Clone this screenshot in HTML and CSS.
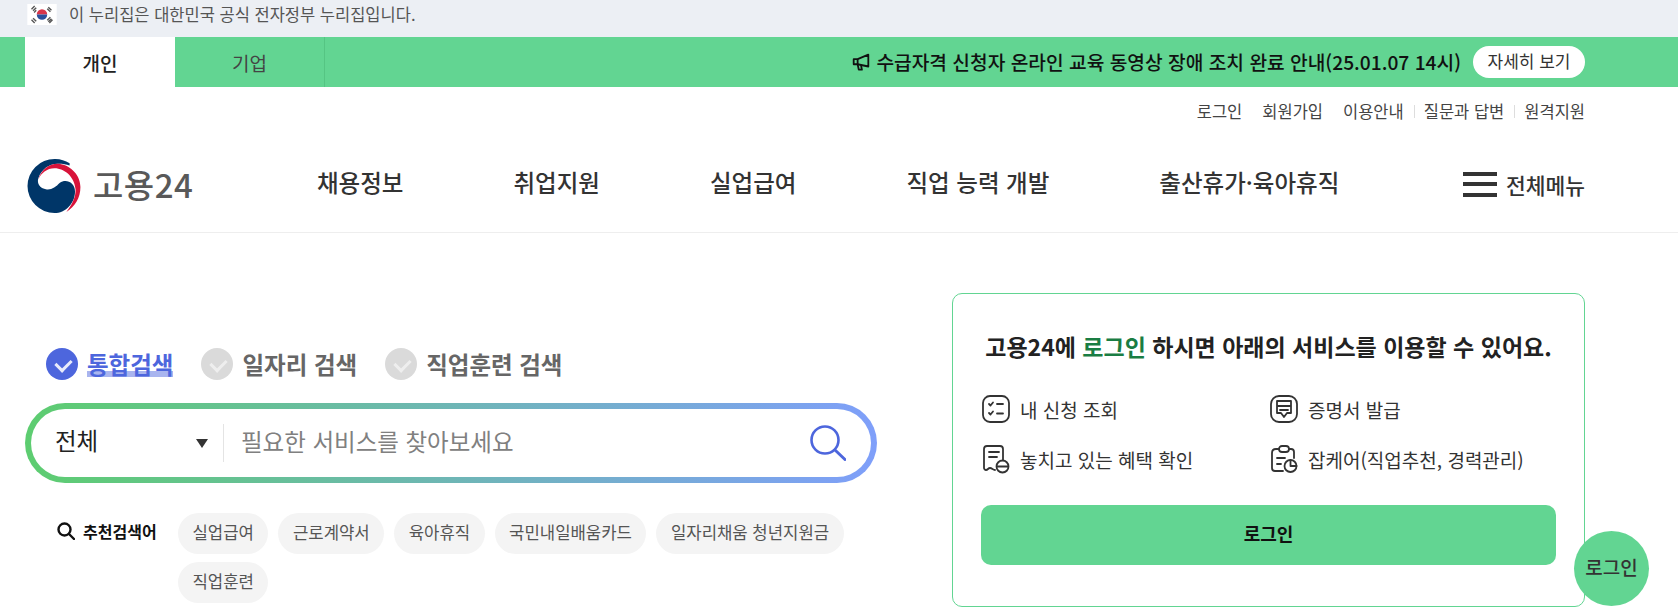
FILE: index.html
```html
<!DOCTYPE html>
<html lang="ko">
<head>
    <meta charset="UTF-8">
    <meta name="viewport" content="width=device-width, initial-scale=1.0">
    <title>고용24</title>
    <link rel="stylesheet" href="styles.css">
</head>
<body>
    <div class="gov-bar">
        <svg class="flag" viewBox="0 0 28 20">
            <rect width="28" height="20" fill="#fff"/>
            <path d="M4 5l3-3M5.500 6.500l3-3M6.500 8l2-2M20 3l3 3M19 4.500l3 3M4 15l3 3M5.500 13.500l3 3M20 17l3-3M19 15.500l3-3M21 18l3-3" stroke="#555" stroke-width="1.300"/>
            <path d="M9 10a5 5 0 0 1 10 0z" fill="#d8354a"/>
            <path d="M9 10a5 5 0 0 0 10 0z" fill="#2a4f9c"/>
        </svg>
        <span>이 누리집은 대한민국 공식 전자정부 누리집입니다.</span>
    </div>

    <div class="notice-bar">
        <a class="user-tab active">개인</a>
        <a class="user-tab">기업</a>
        <div class="notice">
            <svg class="megaphone" viewBox="0 0 16 16" fill="none" stroke="#111" stroke-width="1.600" stroke-linejoin="round">
                <path d="M14.500 1.500v10.500L5 10H1.500V5.500H5z"/>
                <path d="M5 5.500V10l1 4.800h2.800L8 10.800"/>
            </svg>
            <span>수급자격 신청자 온라인 교육 동영상 장애 조치 완료 안내(25.01.07 14시)</span>
            <a class="more-btn">자세히 보기</a>
        </div>
    </div>

    <header class="site-header">
        <ul class="util-menu">
            <li>로그인</li>
            <li>회원가입</li>
            <li>이용안내</li>
            <li class="line">질문과 답변</li>
            <li class="line">원격지원</li>
        </ul>
        <div class="gnb">
            <a class="logo">
                <svg class="logo-mark" viewBox="0 0 100 100">
                    <path d="M78 8A50 50 0 0 0 50 0a50 50 0 0 0 0 100c20 0 38-18 38-40 0-18-18-24-28-16-8 8-16 14-26 12-10-2-17-10-14-20C26 18 42 8 58 9c7 0 14 1 20 3z" fill="#003668"/>
                    <path d="M20 38C26 18 42 8 58 9c24 3 40 23 40 43 0 20-10 36-26 46 10-13 18-28 17-42C87 33 69 17 50 17c-14 0-25 9-30 21z" fill="#d8133a"/>
                </svg>
                <span class="logo-text">고용24</span>
            </a>
            <nav class="gnb-list">
                <a>채용정보</a>
                <a>취업지원</a>
                <a>실업급여</a>
                <a>직업 능력 개발</a>
                <a>출산휴가·육아휴직</a>
            </nav>
            <a class="all-menu">
                <span class="burger"></span>
                <span>전체메뉴</span>
            </a>
        </div>
    </header>

    <main class="main">
        <section class="search-area">
            <div class="search-tabs">
                <label class="search-tab on"><i class="check"></i><span>통합검색</span></label>
                <label class="search-tab"><i class="check"></i><span>일자리 검색</span></label>
                <label class="search-tab"><i class="check"></i><span>직업훈련 검색</span></label>
            </div>
            <div class="search-box">
                <div class="search-inner">
                    <div class="select"><span class="select-text">전체</span><i class="caret"></i></div>
                    <div class="placeholder">필요한 서비스를 찾아보세요</div>
                    <svg class="search-icon" viewBox="0 0 36 36" fill="none" stroke="#4d66dd">
                        <circle cx="15" cy="15" r="13.500" stroke-width="2.600"/>
                        <path d="M25 25l10 9.500" stroke-width="3" stroke-linecap="round"/>
                    </svg>
                </div>
            </div>
            <div class="keywords">
                <div class="kw-title">
                    <svg viewBox="0 0 18 18" fill="none" stroke="#111" stroke-width="2.400">
                        <circle cx="7.500" cy="7.500" r="6"/>
                        <path d="M12 12l5 5" stroke-linecap="round"/>
                    </svg>
                    <span>추천검색어</span>
                </div>
                <div class="kw-list">
                    <a>실업급여</a>
                    <a>근로계약서</a>
                    <a>육아휴직</a>
                    <a>국민내일배움카드</a>
                    <a>일자리채움 청년지원금</a>
                    <a>직업훈련</a>
                </div>
            </div>
        </section>

        <section class="login-card">
            <h2>고용24에 <em>로그인</em> 하시면 아래의 서비스를 이용할 수 있어요.</h2>
            <ul class="service-list">
                <li>
                    <svg viewBox="0 0 30 30" fill="none" stroke="#333" stroke-width="1.800" stroke-linecap="round" stroke-linejoin="round">
                        <rect x="2" y="2" width="26" height="26" rx="7"/>
                        <path d="M8 10l1.500 1.500L12 8.500M16 10h6M8 19l1.500 1.500L12 17.500M16 19.500h6"/>
                    </svg>
                    <span>내 신청 조회</span>
                </li>
                <li>
                    <svg viewBox="0 0 30 30" fill="none" stroke="#333" stroke-width="1.800" stroke-linecap="round" stroke-linejoin="round">
                        <rect x="2" y="2" width="26" height="26" rx="8"/>
                        <path d="M8 19V7h14v12h-4l-3 4-3-4zM8 12h14M11 16h8"/>
                    </svg>
                    <span>증명서 발급</span>
                </li>
                <li>
                    <svg viewBox="0 0 30 30" fill="none" stroke="#333" stroke-width="1.800" stroke-linecap="round" stroke-linejoin="round">
                        <path d="M14 26c-2 0-3-2-5-2s-2 2-4 2c-1 0-2-1-2-2V5c0-2 1-3 3-3h13c2 0 3 1 3 3v11"/>
                        <path d="M8 8h10M8 13h8"/>
                        <circle cx="21.500" cy="22.500" r="6"/>
                        <path d="M16 22.500h11"/>
                    </svg>
                    <span>놓치고 있는 혜택 확인</span>
                </li>
                <li>
                    <svg viewBox="0 0 30 30" fill="none" stroke="#333" stroke-width="1.800" stroke-linecap="round" stroke-linejoin="round">
                        <path d="M10 5H7C4 5 3 6 3 9v15c0 2 1 3 3 3h8M20 5h2c2 0 3 1 3 3v6"/>
                        <rect x="10" y="2" width="10" height="6" rx="3"/>
                        <path d="M8 14h8M8 20h4"/>
                        <circle cx="21.500" cy="22" r="6"/>
                        <path d="M21.500 16v6h6"/>
                    </svg>
                    <span>잡케어(직업추천, 경력관리)</span>
                </li>
            </ul>
            <a class="login-btn">로그인</a>
        </section>
    </main>

    <a class="float-login">로그인</a>
</body>
</html>
```

FILE: styles.css
```css
* {
    box-sizing: border-box;
}
html, body {
    margin: 0;
    padding: 0;
}
body {
    background-color: #fff;
    color: #222;
    font-family: "Noto Sans CJK KR", "Noto Sans", sans-serif;
    font-size: 16px;
    overflow: hidden;
}
ul {
    list-style: none;
    margin: 0;
    padding: 0;
}
h2 {
    margin: 0;
}
em, i {
    font-style: normal;
}

/*상단 정부 누리집 안내*/
.gov-bar {
    display: flex;
    align-items: center;
    height: 37px;
    padding: 0 0 9px 27px;
    gap: 12px;
    background-color: #eceff4;
    color: #555;
    font-size: 16.500px;
}
.flag {
    width: 30px;
    height: 21px;
}

/*초록색 공지 바*/
.notice-bar {
    display: flex;
    height: 50px;
    padding: 0 93px 0 25px;
    background-color: #62d592;
}
.user-tab {
    display: flex;
    align-items: center;
    justify-content: center;
    width: 150px;
    color: #444;
    font-size: 19px;
    border-right: 1px solid #55c583;
}
.user-tab.active {
    background-color: #fff;
    color: #222;
    font-weight: 500;
    border-right: 0;
}
.notice {
    display: flex;
    align-items: center;
    margin-left: auto;
    color: #111;
    font-size: 19.200px;
    font-weight: 500;
}
.megaphone {
    width: 18px;
    height: 18px;
    margin-right: 6px;
}
.more-btn {
    margin-left: 12px;
    padding: 0 14.500px;
    height: 32px;
    line-height: 29px;
    border-radius: 16px;
    background-color: #fff;
    color: #333;
    font-size: 17px;
    font-weight: 400;
}

/*헤더*/
.site-header {
    height: 146px;
    padding: 0 93px 0 27px;
    border-bottom: 1px solid #eee;
}
.util-menu {
    display: flex;
    justify-content: flex-end;
    padding-top: 13px;
    color: #444;
    font-size: 16.500px;
    line-height: 22px;
}
.util-menu li {
    margin-left: 20px;
}
.util-menu .line {
    position: relative;
}
.util-menu .line::before { /*구분선*/
    content: '';
    position: absolute;
    left: -10px;
    top: 5px;
    height: 13px;
    border-left: 1px solid #ddd;
}
.gnb {
    display: flex;
    align-items: center;
    margin-top: 27px;
    height: 70px;
}
.logo {
    display: flex;
    align-items: center;
    width: 290px;
}
.logo-mark {
    width: 55px;
    height: 54px;
    margin-top: 3px;
}
.logo-text {
    margin-left: 11px;
    color: #595959;
    font-size: 33px;
    font-weight: 500;
    letter-spacing: 0.500px;
}
.gnb-list {
    display: flex;
    gap: 110px;
    color: #333;
    font-size: 23.500px;
    font-weight: 500;
    padding-bottom: 4px;
}
.all-menu {
    display: flex;
    align-items: center;
    margin-left: auto;
    gap: 9px;
    color: #333;
    font-size: 21.500px;
    font-weight: 500;
}
.burger {
    width: 34px;
    height: 25px;
    border-top: 4px solid #333;
    border-bottom: 4px solid #333;
    position: relative;
    margin-left: -1px;
}
.burger::after {
    content: '';
    position: absolute;
    left: 0;
    right: 0;
    top: 6.500px;
    border-top: 4px solid #333;
}

/*검색영역*/
.main {
    display: flex;
    justify-content: space-between;
    padding: 60px 93px 0 25px;
}
.search-area {
    width: 852px;
    padding-top: 51px;
}
.search-tabs {
    display: flex;
    gap: 28px;
    height: 40px;
    padding-left: 21px;
}
.search-tab {
    display: flex;
    align-items: center;
    gap: 9px;
    color: #666;
    font-size: 23.500px;
    font-weight: 700;
}
.search-tab .check {
    width: 32px;
    height: 32px;
    border-radius: 50%;
    background-color: #dadada;
    position: relative;
}
.search-tab .check::after { /*체크 표시*/
    content: '';
    position: absolute;
    left: 10px;
    top: 10px;
    width: 12px;
    height: 8px;
    border-left: 3px solid #eee;
    border-bottom: 3px solid #eee;
    transform: rotate(-45deg);
}
.search-tab.on {
    color: #4d66dd;
}
.search-tab.on .check {
    background-color: #4d66dd;
}
.search-tab.on .check::after {
    border-color: #e8ebfb;
}
.search-tab.on span {
    background: linear-gradient(transparent 78%, #a9b5ef 78%);
    line-height: 26px;
}
.search-box {
    margin-top: 19px;
    height: 80px;
    padding: 6px;
    border-radius: 40px;
    background: linear-gradient(90deg, #5dcd70, #7f9ffa);
}
.search-inner {
    display: flex;
    align-items: center;
    height: 100%;
    padding: 0 25px 0 24px;
    border-radius: 34px;
    background-color: #fff;
}
.select {
    display: flex;
    align-items: center;
    justify-content: space-between;
    width: 169px;
    height: 38px;
    padding-right: 15px;
    border-right: 1px solid #e4e4e4;
    color: #222;
    font-size: 23.500px;
}
.select-text {
    margin-top: -7px;
}
.caret {
    border-top: 9px solid #333;
    border-left: 6px solid transparent;
    border-right: 6px solid transparent;
}
.placeholder {
    margin-left: 17px;
    margin-top: -5px;
    color: #808080;
    font-size: 23.500px;
}
.search-icon {
    width: 36px;
    height: 36px;
    margin-left: auto;
}
.keywords {
    display: flex;
    margin-top: 30px;
}
.kw-title {
    display: flex;
    align-items: center;
    gap: 8px;
    width: 153px;
    height: 36px;
    padding-left: 32px;
    flex-shrink: 0;
    color: #111;
    font-size: 16px;
    font-weight: 700;
}
.kw-title svg {
    width: 18px;
    height: 18px;
}
.kw-list {
    display: flex;
    flex-wrap: wrap;
    gap: 8px 10px;
    width: 680px;
}
.kw-list a {
    height: 41px;
    padding: 0 14.500px;
    line-height: 39px;
    border-radius: 21px;
    background-color: #f4f4f4;
    color: #555;
    font-size: 16.700px;
}

/*로그인 카드*/
.login-card {
    width: 633px;
    height: 314px;
    padding: 34px 28px 0;
    border: 1px solid #62d592;
    border-radius: 10px;
}
.login-card h2 {
    color: #222;
    font-size: 23px;
    font-weight: 700;
    line-height: 36px;
    text-align: center;
}
.login-card em {
    color: #1a7d43;
}
.service-list {
    display: grid;
    grid-template-columns: 288px 1fr;
    row-gap: 20px;
    margin-top: 30px;
}
.service-list li {
    display: flex;
    align-items: center;
    gap: 9px;
    height: 30px;
    color: #333;
    font-size: 19px;
}
.service-list svg {
    width: 30px;
    height: 30px;
}
.login-btn {
    display: block;
    margin-top: 31px;
    height: 60px;
    line-height: 56px;
    border-radius: 10px;
    background-color: #62d592;
    color: #111;
    font-size: 18px;
    font-weight: 700;
    text-align: center;
}
.float-login { /*화면에 떠 있는 버튼*/
    position: absolute;
    left: 1574px;
    top: 531px;
    width: 75px;
    height: 75px;
    line-height: 72px;
    border-radius: 50%;
    background-color: #62d592;
    color: #333;
    font-size: 19px;
    font-weight: 500;
    text-align: center;
}
```
